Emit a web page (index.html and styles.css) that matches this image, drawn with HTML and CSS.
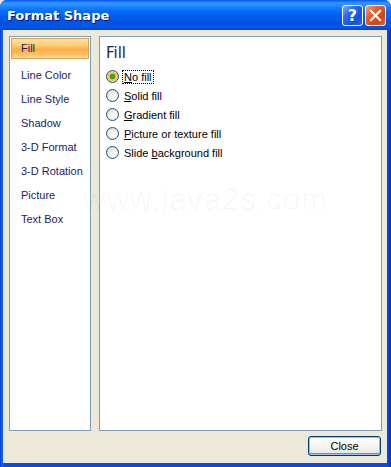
FILE: index.html
```html
<!DOCTYPE html>
<html lang="en">
<head>
    <meta charset="UTF-8">
    <title>Format Shape</title>
    <link rel="stylesheet" href="styles.css">
</head>
<body>
    <div class="window">
        <!-- Barra de título -->
        <div class="titlebar">
            <span class="title">Format Shape</span>
            <div class="title-buttons">
                <span class="tb-btn help">?</span>
                <span class="tb-btn close">
                    <svg width="13" height="13" viewBox="0 0 13 13">
                        <path d="M2 2 L11 11 M11 2 L2 11" stroke="#fff" stroke-width="2.2" stroke-linecap="square"/>
                    </svg>
                </span>
            </div>
        </div>

        <div class="client">
            <div class="panels">
                <!-- Lista de categorias -->
                <ul class="nav">
                    <li class="selected">Fill</li>
                    <li>Line Color</li>
                    <li>Line Style</li>
                    <li>Shadow</li>
                    <li>3-D Format</li>
                    <li>3-D Rotation</li>
                    <li>Picture</li>
                    <li>Text Box</li>
                </ul>

                <!-- Opções de preenchimento -->
                <div class="content">
                    <h2>Fill</h2>
                    <div class="radio checked"><span class="dot"></span><span class="focus"><u>N</u>o fill</span></div>
                    <div class="radio"><span class="dot"></span><span><u>S</u>olid fill</span></div>
                    <div class="radio"><span class="dot"></span><span><u>G</u>radient fill</span></div>
                    <div class="radio"><span class="dot"></span><span><u>P</u>icture or texture fill</span></div>
                    <div class="radio"><span class="dot"></span><span>Slide <u>b</u>ackground fill</span></div>
                </div>
            </div>

            <div class="footer">
                <button class="btn">Close</button>
            </div>

            <div class="watermark">www.java2s.com</div>
        </div>
    </div>
</body>
</html>
```

FILE: styles.css
```css
body {
    margin: 0;
    padding: 0;
    font-family: 'Liberation Sans', Arial, sans-serif;
    font-size: 11px;
    background: #ece9d8;
}

.window {
    width: 391px;
    height: 467px;
    display: flex;
    flex-direction: column;
    background: linear-gradient(to right, #0831d9 0, #166aee 2px, #0a4ae0 4px, #0a4ae0 387px, #0841d0 389px, #002fa8 391px);
    border-radius: 7px 7px 0 0;
    overflow: hidden;
}

.titlebar {
    height: 30px;
    display: flex;
    align-items: center;
    justify-content: space-between;
    padding: 0 5px 0 7px;
    background: linear-gradient(to bottom, #0058ee 0, #3a93ff 3px, #288eff 5px, #127dff 8px, #036ffc 11px, #0262ee 15px, #0057e5 19px, #0054e3 24px, #0055eb 27px, #0048d4 30px);
}

.title {
    color: #fff;
    font-family: 'DejaVu Sans', sans-serif;
    font-weight: bold;
    font-size: 13px;
    text-shadow: 1px 1px 0 #0a1883;
    margin-top: 1px;
}

.title-buttons {
    display: flex;
    gap: 2px;
    margin-top: 1px;
}

.tb-btn {
    width: 19px;
    height: 19px;
    border: 1px solid #fff;
    border-radius: 3px;
    display: flex;
    align-items: center;
    justify-content: center;
    color: #fff;
}

.help {
    background: linear-gradient(135deg, #7fa8ff 0, #2a68f0 35%, #1450e0 70%, #2864e8 100%);
    font-family: 'DejaVu Sans', sans-serif;
    font-weight: bold;
    font-size: 16px;
}

.close {
    background: linear-gradient(135deg, #f5a07e 0, #e5602f 35%, #d0471a 70%, #e06030 100%);
}

.client {
    position: relative;
    flex: 1;
    margin: 0 4px 4px 3px;
    background: #ece9d8;
    padding: 6px 5px 7px 6px;
    display: flex;
    flex-direction: column;
}

.panels {
    display: flex;
    gap: 8px;
    height: 395px;
}

.nav {
    list-style: none;
    margin: 0;
    padding: 1px;
    width: 78px;
    background: #fff;
    border: 1px solid #7f9db9;
}

.nav li {
    height: 24px;
    line-height: 22px;
    padding-left: 10px;
    color: #1b1b6a;
}

.nav li.selected {
    height: 19px;
    line-height: 19px;
    margin-bottom: 5px;
    padding-left: 9px;
    border: 1px solid #d2a560;
    background: linear-gradient(to bottom, #ffe4a0 0, #ffcb72 35%, #ffae45 55%, #ffc063 80%, #ffd88c 100%);
}

.content {
    flex: 1;
    background: #fff;
    border: 1px solid #7f9db9;
    padding: 7px 6px;
}

.content h2 {
    margin: 0 0 5px 0;
    font-size: 15px;
    font-weight: normal;
    color: #1c2450;
    font-family: 'DejaVu Sans', sans-serif;
}

.radio {
    display: flex;
    align-items: center;
    gap: 5px;
    height: 19px;
    color: #000;
}

.radio .dot {
    width: 11px;
    height: 11px;
    border: 1px solid #1c5180;
    border-radius: 50%;
    background: radial-gradient(circle at 65% 65%, #fff 0, #f2f2ee 40%, #d4d4cc 100%);
    box-sizing: content-box;
}

.radio.checked .dot {
    background: radial-gradient(circle, #3dbb2a 0, #21a121 2.2px, #f8b33a 3px, #fbc65c 4.5px, #fde4a8 6px);
}

.focus {
    outline: 1px dotted #000;
    outline-offset: 0;
    padding: 0 1px;
    margin-left: -1px;
}

.footer {
    display: flex;
    justify-content: flex-end;
    padding-top: 5px;
    padding-right: 1px;
}

.btn {
    width: 73px;
    height: 20px;
    padding: 0;
    font-family: 'Liberation Sans', Arial, sans-serif;
    font-size: 11px;
    color: #000;
    border: 1px solid #003c74;
    border-radius: 3px;
    background: linear-gradient(to bottom, #ffffff 0, #f4f3ee 60%, #e3e1d6 100%);
    box-shadow: inset 0 0 0 1px #9fbcea, inset 0 -1px 0 1px #6d92d4;
}

.watermark {
    position: absolute;
    left: 80px;
    top: 152px;
    font-size: 31px;
    letter-spacing: 1px;
    color: rgba(0, 0, 0, 0.03);
    pointer-events: none;
}
```
